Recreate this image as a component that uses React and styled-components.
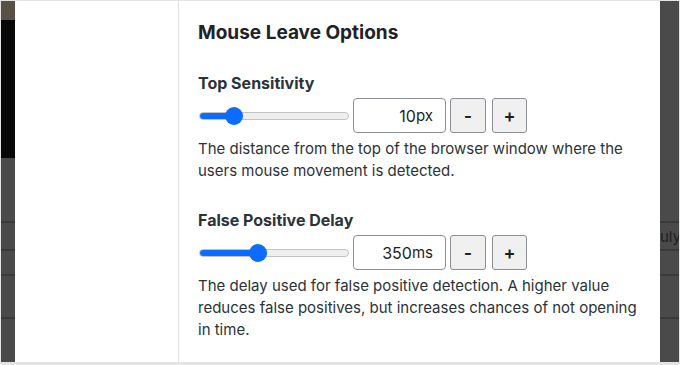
import styled, { createGlobalStyle } from "styled-components";

const GlobalStyle = createGlobalStyle`
  html, body {
    margin: 0;
    padding: 0;
    background: #fff;
  }
  body {
    font-family: Inter, "Noto Sans", "Liberation Sans", sans-serif;
    -webkit-font-smoothing: antialiased;
  }
`;

const Frame = styled.div`
  box-sizing: border-box;
  width: 680px;
  height: 365px;
  display: flex;
  border: 1px solid #e4e4e4;
  border-bottom-width: 3px;
  overflow: hidden;
`;

const Backdrop = styled.div`
  width: ${(p) => p.width}px;
  flex-shrink: 0;
  display: flex;
  flex-direction: column;
  background: #4a4a4a;
`;

const Band = styled.div`
  box-sizing: border-box;
  height: ${(p) => p.h}px;
  flex-shrink: 0;
  background: ${(p) => p.bg || "#4a4a4a"};
  border-bottom: ${(p) => (p.line ? "2px solid #3a3a3a" : "none")};
  color: #1e1e1e;
  font-size: 15px;
  line-height: ${(p) => p.h}px;
  white-space: nowrap;
  overflow: hidden;
`;

const Sidebar = styled.div`
  width: 163px;
  flex-shrink: 0;
  background: #fff;
`;

const Panel = styled.div`
  box-sizing: border-box;
  width: 482px;
  flex-shrink: 0;
  background: #fff;
  border-left: 1px solid #e2e2e2;
  padding: 20px 18px 0 19px;
`;

const Title = styled.h2`
  margin: 0 0 28px;
  font-size: 19px;
  line-height: 24px;
  font-weight: 700;
  color: #1d2327;
`;

const Section = styled.div`
  margin-bottom: 28px;
`;

const Label = styled.h3`
  margin: 0 0 5px;
  font-size: 16px;
  line-height: 20px;
  font-weight: 700;
  color: #2c3338;
`;

const Controls = styled.div`
  display: flex;
  align-items: center;
  height: 35px;
`;

const Range = styled.input`
  -webkit-appearance: none;
  appearance: none;
  box-sizing: border-box;
  width: 150px;
  height: 8px;
  margin: 0 4px 0 1px;
  border-radius: 4px;
  border: 1px solid #c3c3c3;
  outline: none;

  &::-webkit-slider-thumb {
    -webkit-appearance: none;
    width: 18px;
    height: 18px;
    border-radius: 50%;
    background: #0b6cff;
    border: none;
  }
`;

const ValueBox = styled.div`
  box-sizing: border-box;
  width: 93px;
  height: 35px;
  border: 1px solid #8c8f94;
  border-radius: 4px;
  padding-right: 12px;
  display: flex;
  align-items: center;
  justify-content: flex-end;
  font-size: 16px;
  color: #1e1e1e;
`;

const Unit = styled.span`
  font-size: 15px;
`;

const Step = styled.button`
  box-sizing: border-box;
  width: ${(p) => p.w}px;
  height: 35px;
  margin-left: ${(p) => p.gap}px;
  border: 1px solid #8c8f94;
  border-radius: 3px;
  background: #f0f0f1;
  font-family: inherit;
  font-size: 18px;
  font-weight: 600;
  color: #1e1e1e;
  padding: 0;
  display: flex;
  align-items: center;
  justify-content: center;
`;

const Help = styled.p`
  margin: 5px 0 0;
  font-size: 15px;
  line-height: 22px;
  color: #2c3338;
`;

const options = [
  {
    label: "Top Sensitivity",
    value: "10",
    unit: "px",
    pos: 0.19,
    help: "The distance from the top of the browser window where the users mouse movement is detected.",
  },
  {
    label: "False Positive Delay",
    value: "350",
    unit: "ms",
    pos: 0.38,
    help: "The delay used for false positive detection. A higher value reduces false positives, but increases chances of not opening in time.",
  },
];

const Slider = ({ pos }) => {
  // fill stops at the thumb centre (150px track, 18px thumb)
  const stop = ((9 + pos * 132) / 150) * 100;
  return (
    <Range
      type="range"
      min="0"
      max="100"
      defaultValue={pos * 100}
      style={{
        background: `linear-gradient(to right, #0b6cff 0 ${stop}%, #efefef ${stop}% 100%)`,
      }}
    />
  );
};

const Option = ({ label, value, unit, pos, help }) => (
  <Section>
    <Label>{label}</Label>
    <Controls>
      <Slider pos={pos} />
      <ValueBox>
        {value}
        <Unit>{unit}</Unit>
      </ValueBox>
      <Step w={36} gap={4}>-</Step>
      <Step w={35} gap={6}>+</Step>
    </Controls>
    <Help>{help}</Help>
  </Section>
);

const App = () => (
  <>
    <GlobalStyle />
    <Frame>
      <Backdrop width={14}>
        <Band h={19} bg="#585246" />
        <Band h={138} bg="#080808" />
        <Band h={65} line />
        <Band h={28} line />
        <Band h={25} line />
        <Band h={43} line />
        <Band h={44} />
      </Backdrop>
      <Sidebar />
      <Panel>
        <Title>Mouse Leave Options</Title>
        {options.map((o) => (
          <Option key={o.label} {...o} />
        ))}
      </Panel>
      <Backdrop width={20}>
        <Band h={222} line />
        <Band h={28} line>uly</Band>
        <Band h={25} line />
        <Band h={43} line />
        <Band h={44} />
      </Backdrop>
    </Frame>
  </>
);

export default App;
